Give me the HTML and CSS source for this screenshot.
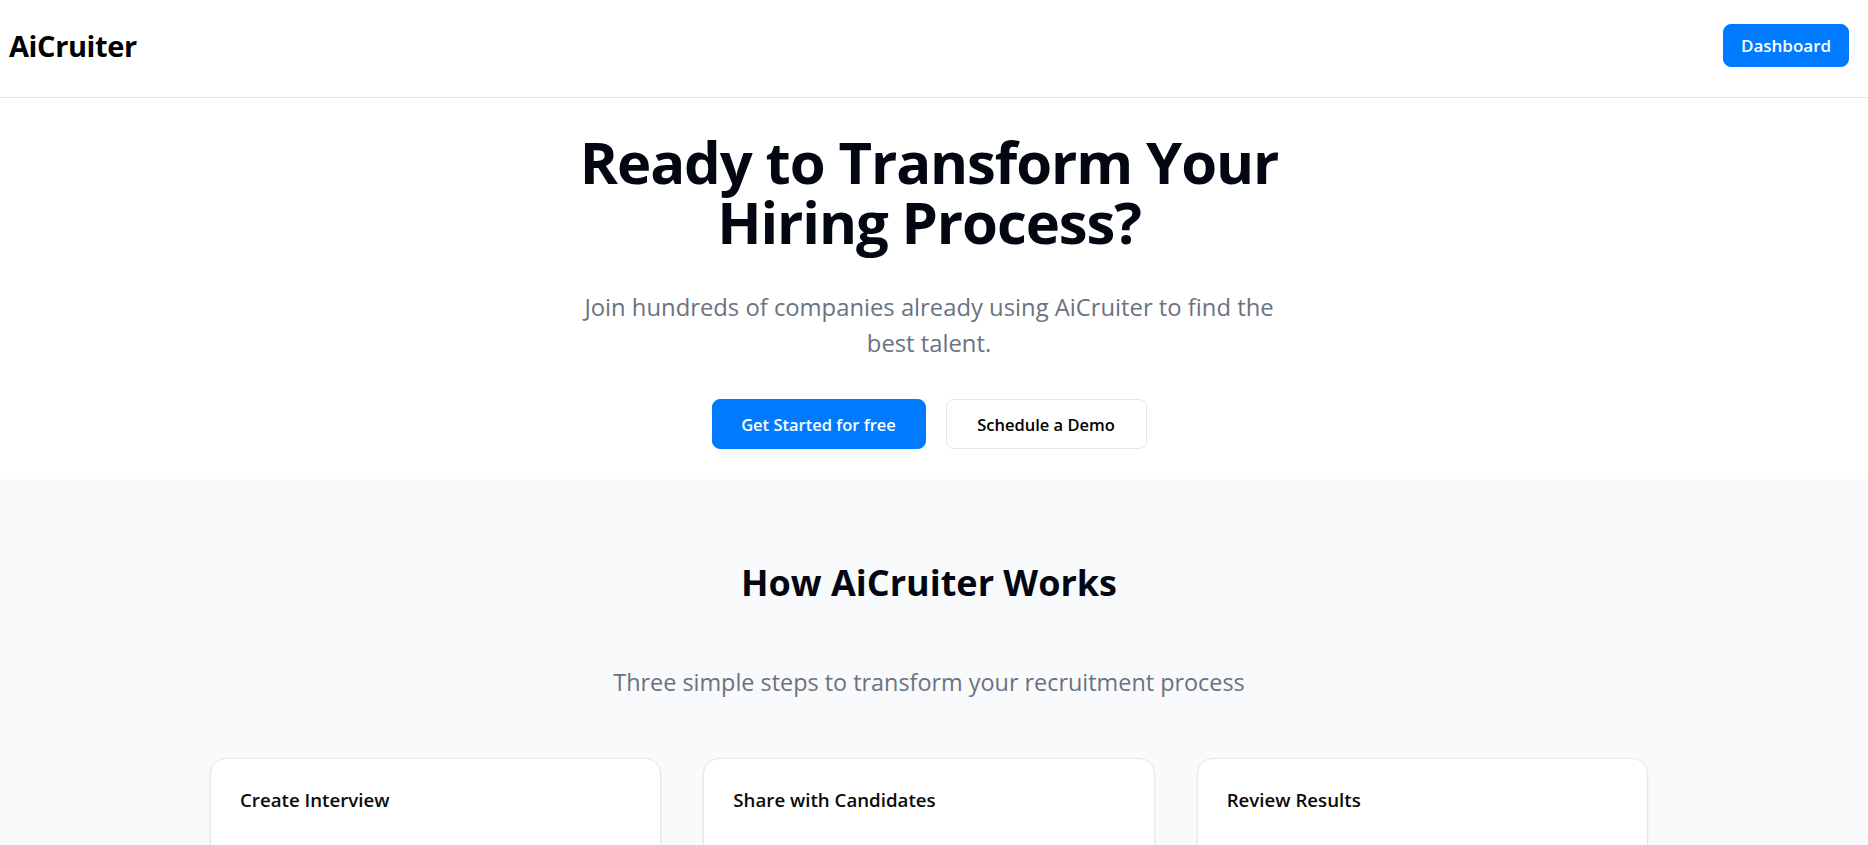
FILE: index.html
```html
<!DOCTYPE html>
<html lang="en">
<head>
<meta charset="utf-8">
<title>AiCruiter</title>
<link rel="stylesheet" href="styles.css">
</head>
<body>
<div class="page">
  <header class="header">
    <div class="logo">AiCruiter</div>
    <button class="btn btn-primary btn-nav">Dashboard</button>
  </header>

  <section class="hero">
    <h1 class="hero-title">Ready to Transform Your Hiring Process?</h1>
    <p class="hero-sub">Join hundreds of companies already using AiCruiter to find the best talent.</p>
    <div class="hero-actions">
      <button class="btn btn-primary btn-lg">Get Started for free</button>
      <button class="btn btn-outline btn-lg">Schedule a Demo</button>
    </div>
  </section>

  <section class="how">
    <h2 class="how-title">How AiCruiter Works</h2>
    <p class="how-sub">Three simple steps to transform your recruitment process</p>
    <div class="cards">
      <div class="card"><h3 class="card-title">Create Interview</h3></div>
      <div class="card"><h3 class="card-title">Share with Candidates</h3></div>
      <div class="card"><h3 class="card-title">Review Results</h3></div>
    </div>
  </section>
</div>
</body>
</html>
```

FILE: styles.css
```css
* { box-sizing: border-box; }
html, body { margin: 0; padding: 0; }
body {
  font-family: "Open Sans", "Noto Sans", sans-serif;
  color: #030712;
  background: #ffffff;
  overflow: hidden;
}
.header {
  display: flex;
  justify-content: space-between;
  align-items: flex-start;
  padding: 24px 19px 30px 9px;
  border-bottom: 1px solid #e5e7eb;
  height: 98px;
}
.logo {
  font-size: 29px;
  font-weight: 700;
  line-height: 43px;
  letter-spacing: -0.4px;
  color: #000;
}
.btn {
  font-family: inherit;
  border-radius: 8px;
  cursor: pointer;
  font-weight: 600;
}
.btn-primary {
  background: #007aff;
  color: #fff;
  border: 1px solid #007aff;
}
.btn-outline {
  background: #fff;
  color: #000;
  border: 1px solid #e5e7eb;
}
.btn-nav {
  width: 126px;
  height: 43px;
  font-size: 17px;
  padding: 0;
}
.hero {
  display: flex;
  flex-direction: column;
  align-items: center;
  text-align: center;
  padding: 34px 10px 30px 0;
}
.hero-title {
  margin: 0;
  max-width: 720px;
  font-size: 58px;
  line-height: 60px;
  font-weight: 700;
  letter-spacing: -1.1px;
  color: #030712;
}
.hero-sub {
  margin: 37px 0 0;
  max-width: 720px;
  font-size: 23.8px;
  line-height: 36px;
  color: #6b7280;
}
.hero-actions {
  display: flex;
  gap: 20px;
  margin-top: 38px;
}
.btn-lg {
  height: 50px;
  font-size: 16.5px;
  padding: 0;
}
.btn-lg.btn-primary { width: 214px; }
.btn-lg.btn-outline { width: 201px; }
.how {
  background: #f9fafb;
  padding: 84px 10px 120px 0;
  display: flex;
  flex-direction: column;
  align-items: center;
  text-align: center;
}
.how-title {
  margin: 0;
  font-size: 36px;
  line-height: 40px;
  font-weight: 700;
  color: #030712;
}
.how-sub {
  margin: 61px 0 0;
  font-size: 23.4px;
  line-height: 36px;
  color: #6b7280;
}
.cards {
  margin-top: 58px;
  width: 1438px;
  display: grid;
  grid-template-columns: repeat(3, 1fr);
  gap: 42px;
  text-align: left;
}
.card {
  background: #fff;
  border: 1px solid #e5e7eb;
  border-radius: 16px;
  box-shadow: 0 1px 3px rgba(0,0,0,0.06);
  padding: 27px 29px;
  min-height: 260px;
}
.card-title {
  margin: 0;
  font-size: 18.7px;
  line-height: 28px;
  font-weight: 600;
  color: #0a0a0a;
}
```
